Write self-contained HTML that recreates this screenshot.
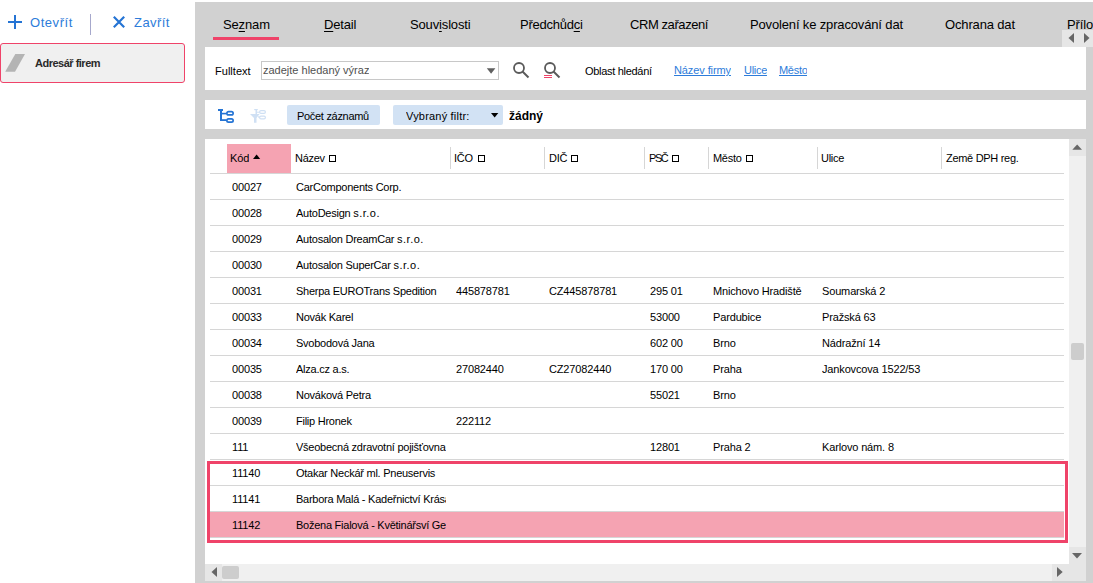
<!DOCTYPE html>
<html><head><meta charset="utf-8">
<style>
*{margin:0;padding:0;box-sizing:border-box}
html,body{width:1093px;height:583px;overflow:hidden;background:#fff;font-family:"Liberation Sans",sans-serif;color:#000}
.a{position:absolute}
.t{position:absolute;white-space:nowrap;font-size:11px;line-height:13px;overflow:hidden}
.bl{color:#2d7cda}
.tab{position:absolute;top:16px;font-size:13px;line-height:16px;white-space:nowrap;color:#000;letter-spacing:-0.15px}
.r{letter-spacing:-0.3px}
.u{text-decoration:underline}
.tab u{text-underline-offset:2px}
</style></head><body>

<svg class="a" style="left:8px;top:15px" width="14" height="14" viewBox="0 0 14 14"><path d="M7 0V14M0 7H14" stroke="#2574d4" stroke-width="2"/></svg>
<div class="t bl" style="left:30px;top:15px;font-size:13px;line-height:15px;overflow:visible;letter-spacing:0.55px">Otevřít</div>
<div class="a" style="left:90px;top:14px;width:1px;height:21px;background:#a6a8cc"></div>
<svg class="a" style="left:113px;top:16px" width="12" height="12" viewBox="0 0 12 12"><path d="M0.8 0.8L11.2 11.2M11.2 0.8L0.8 11.2" stroke="#2574d4" stroke-width="2.2"/></svg>
<div class="t bl" style="left:134px;top:15px;font-size:13px;line-height:15px;overflow:visible;letter-spacing:0.45px">Zavřít</div>
<div class="a" style="left:0;top:43px;width:185px;height:40px;background:#f0f0f0;border:1px solid #ef4369;border-radius:3px"></div>
<svg class="a" style="left:0;top:50px" width="30" height="26"><polygon points="15.3,4 25,4 15,21.7 5.2,21.7" fill="#b4b4b4"/></svg>
<div class="t" style="left:35px;top:57px;font-weight:bold;color:#2a2a2a;letter-spacing:-0.5px;overflow:visible">Adresář firem</div>
<div class="a" style="left:195px;top:2px;width:898px;height:581px;background:#d1d1d1"></div>
<div class="a" style="left:195px;top:2px;width:898px;height:45px;overflow:hidden">
<div class="tab" style="left:28px;top:15px">Se<u>z</u>nam</div>
<div class="tab" style="left:129px;top:15px"><u>D</u>etail</div>
<div class="tab" style="left:215px;top:15px">Souv<u>i</u>slosti</div>
<div class="tab" style="left:325px;top:15px"><span style="letter-spacing:-0.25px">Předchůd<u>c</u>i</span></div>
<div class="tab" style="left:435px;top:15px"><span style="letter-spacing:-0.42px">CRM zařazení</span></div>
<div class="tab" style="left:555px;top:15px">Povolení ke zpracování dat</div>
<div class="tab" style="left:750px;top:15px">Ochrana dat</div>
<div class="tab" style="left:872px;top:15px">Přílohy</div>
</div>
<div class="a" style="left:213px;top:37px;width:66px;height:3px;background:#ef4369"></div>
<div class="a" style="left:1062px;top:30px;width:31px;height:17px;background:#e6e6e6"></div>
<svg class="a" style="left:1062px;top:30px" width="31" height="17"><polygon points="6.5,8 12,3 12,13" fill="#666"/><polygon points="22,3 27.5,8 22,13" fill="#666"/></svg>
<div class="a" style="left:205px;top:47px;width:881px;height:43px;background:#fff"></div>
<div class="t" style="left:215px;top:65px;letter-spacing:0.02px">Fulltext</div>
<div class="a" style="left:261px;top:61px;width:238px;height:19px;border:1px solid #c8c8c8;background:#fff"></div>
<div class="t" style="left:263px;top:64px;color:#505050;letter-spacing:0px">zadejte hledaný výraz</div>
<svg class="a" style="left:486px;top:68px" width="10" height="6"><polygon points="0.8,0.3 9.4,0.3 5.1,5.8" fill="#606060"/></svg>
<svg class="a" style="left:510px;top:60px" width="22" height="22"><circle cx="9" cy="8" r="5" fill="none" stroke="#5a5a5a" stroke-width="1.8"/><path d="M12.5 11.5L18.5 17.5" stroke="#5a5a5a" stroke-width="2"/></svg>
<svg class="a" style="left:541px;top:60px" width="22" height="22"><circle cx="9" cy="8" r="5" fill="none" stroke="#5a5a5a" stroke-width="1.8"/><path d="M12.5 11.5L18.5 17.5" stroke="#5a5a5a" stroke-width="2"/><path d="M3 15.5H11M3 17.5H11" stroke="#ef4369" stroke-width="1"/></svg>
<div class="t r" style="left:585px;top:65px">Oblast hledání</div>
<div class="t u bl" style="left:674px;top:64px;text-underline-offset:1px;letter-spacing:-0.1px">Název firmy</div>
<div class="t u bl r" style="left:744px;top:64px;text-underline-offset:1px">Ulice</div>
<div class="t u bl r" style="left:779px;top:64px;text-underline-offset:1px">Město</div>
<div class="a" style="left:205px;top:100px;width:881px;height:29px;background:#fff"></div>
<svg class="a" style="left:214px;top:104px" width="56" height="24"><g fill="#2574d4"><rect x="4" y="5" width="5" height="2"/><rect x="6" y="5" width="2" height="12"/><rect x="8" y="8.8" width="4.5" height="1.6"/><rect x="6" y="15.2" width="6.5" height="1.8"/></g><rect x="12.85" y="7.55" width="6.3" height="3.4" rx="1.7" fill="none" stroke="#2574d4" stroke-width="1.7"/><rect x="12.85" y="14.9" width="6.3" height="3.3" rx="1.65" fill="none" stroke="#2574d4" stroke-width="1.7"/><g fill="#cfe0f4"><polygon points="36,10 45.6,10 42.5,14 42.5,18.7 40,18.7 40,14"/><rect x="40.2" y="5" width="3.6" height="1.2"/><rect x="41.5" y="5" width="1.5" height="5"/><rect x="43" y="7.7" width="2.6" height="1"/><rect x="44" y="12.3" width="1.6" height="1.3"/></g><rect x="45.6" y="6.6" width="5.8" height="2.8" rx="1.4" fill="none" stroke="#cfe0f4" stroke-width="1.2"/><rect x="45.6" y="12.1" width="5.8" height="2.7" rx="1.35" fill="none" stroke="#cfe0f4" stroke-width="1.2"/></svg>
<div class="a" style="left:287px;top:105px;width:93px;height:20px;background:#d2e2f4;border-radius:2px"></div>
<div class="t r" style="left:297px;top:110px">Počet záznamů</div>
<div class="a" style="left:393px;top:105px;width:110px;height:20px;background:#d2e2f4;border-radius:2px"></div>
<div class="t" style="left:406px;top:110px;letter-spacing:0.2px">Vybraný filtr:</div>
<svg class="a" style="left:491px;top:113px" width="8" height="5"><polygon points="0,0 7.3,0 3.65,4.4" fill="#000"/></svg>
<div class="t" style="left:509px;top:109px;font-size:12px;line-height:14px;font-weight:bold;letter-spacing:0px">žádný</div>
<div class="a" style="left:205px;top:139px;width:881px;height:442px;background:#fff"></div>
<div class="a" style="left:227px;top:144px;width:64px;height:29px;background:#f5a3b2"></div>
<div class="t" style="left:230px;top:152px;letter-spacing:-0.1px">Kód</div>
<svg class="a" style="left:253px;top:154px" width="8" height="6"><polygon points="0,5 7.2,5 3.6,0.6" fill="#000"/></svg>
<div class="t r" style="left:295px;top:152px;overflow:visible">Název</div>
<div class="t r" style="left:454px;top:152px;overflow:visible">IČO</div>
<div class="t r" style="left:549px;top:152px;overflow:visible">DIČ</div>
<div class="t r" style="left:649px;top:152px;overflow:visible"><span style="letter-spacing:-1.4px">PSČ</span></div>
<div class="t r" style="left:713px;top:152px;overflow:visible">Město</div>
<div class="t r" style="left:821px;top:152px;overflow:visible">Ulice</div>
<div class="t r" style="left:946px;top:152px;overflow:visible">Země DPH reg.</div>
<div class="a" style="left:329px;top:155px;width:7px;height:7px;border:1px solid #000"></div>
<div class="a" style="left:478px;top:155px;width:7px;height:7px;border:1px solid #000"></div>
<div class="a" style="left:571px;top:155px;width:7px;height:7px;border:1px solid #000"></div>
<div class="a" style="left:672px;top:155px;width:7px;height:7px;border:1px solid #000"></div>
<div class="a" style="left:746px;top:155px;width:7px;height:7px;border:1px solid #000"></div>
<div class="a" style="left:450px;top:147px;width:1px;height:22px;background:#d6d6d6"></div>
<div class="a" style="left:544px;top:147px;width:1px;height:22px;background:#d6d6d6"></div>
<div class="a" style="left:644px;top:147px;width:1px;height:22px;background:#d6d6d6"></div>
<div class="a" style="left:708px;top:147px;width:1px;height:22px;background:#d6d6d6"></div>
<div class="a" style="left:817px;top:147px;width:1px;height:22px;background:#d6d6d6"></div>
<div class="a" style="left:941px;top:147px;width:1px;height:22px;background:#d6d6d6"></div>
<div class="a" style="left:210px;top:173px;width:854px;height:1px;background:#d6d6d6"></div>
<div class="a" style="left:210px;top:199px;width:854px;height:1px;background:#d6d6d6"></div>
<div class="t" style="left:232px;top:181px;width:58px;letter-spacing:-0.15px">00027</div>
<div class="t" style="left:296px;top:181px;width:150px;letter-spacing:-0.25px">CarComponents Corp.</div>
<div class="a" style="left:210px;top:225px;width:854px;height:1px;background:#d6d6d6"></div>
<div class="t" style="left:232px;top:207px;width:58px;letter-spacing:-0.15px">00028</div>
<div class="t" style="left:296px;top:207px;width:150px;letter-spacing:-0.25px">AutoDesign <span style="letter-spacing:0.5px">s.r.o.</span></div>
<div class="a" style="left:210px;top:251px;width:854px;height:1px;background:#d6d6d6"></div>
<div class="t" style="left:232px;top:233px;width:58px;letter-spacing:-0.15px">00029</div>
<div class="t" style="left:296px;top:233px;width:150px;letter-spacing:-0.25px">Autosalon DreamCar <span style="letter-spacing:0.5px">s.r.o.</span></div>
<div class="a" style="left:210px;top:277px;width:854px;height:1px;background:#d6d6d6"></div>
<div class="t" style="left:232px;top:259px;width:58px;letter-spacing:-0.15px">00030</div>
<div class="t" style="left:296px;top:259px;width:150px;letter-spacing:-0.25px">Autosalon SuperCar <span style="letter-spacing:0.5px">s.r.o.</span></div>
<div class="a" style="left:210px;top:303px;width:854px;height:1px;background:#d6d6d6"></div>
<div class="t" style="left:232px;top:285px;width:58px;letter-spacing:-0.15px">00031</div>
<div class="t" style="left:296px;top:285px;width:150px;letter-spacing:-0.25px">Sherpa EUROTrans Spedition</div>
<div class="t" style="left:456px;top:285px;width:88px;letter-spacing:-0.15px">445878781</div>
<div class="t" style="left:549px;top:285px;width:95px;letter-spacing:-0.15px">CZ445878781</div>
<div class="t" style="left:650px;top:285px;width:58px;letter-spacing:-0.15px">295 01</div>
<div class="t" style="left:713px;top:285px;width:104px;letter-spacing:-0.15px">Mnichovo Hradiště</div>
<div class="t" style="left:822px;top:285px;width:118px;letter-spacing:-0.15px">Soumarská 2</div>
<div class="a" style="left:210px;top:329px;width:854px;height:1px;background:#d6d6d6"></div>
<div class="t" style="left:232px;top:311px;width:58px;letter-spacing:-0.15px">00033</div>
<div class="t" style="left:296px;top:311px;width:150px;letter-spacing:-0.25px">Novák Karel</div>
<div class="t" style="left:650px;top:311px;width:58px;letter-spacing:-0.15px">53000</div>
<div class="t" style="left:713px;top:311px;width:104px;letter-spacing:-0.15px">Pardubice</div>
<div class="t" style="left:822px;top:311px;width:118px;letter-spacing:-0.15px">Pražská 63</div>
<div class="a" style="left:210px;top:355px;width:854px;height:1px;background:#d6d6d6"></div>
<div class="t" style="left:232px;top:337px;width:58px;letter-spacing:-0.15px">00034</div>
<div class="t" style="left:296px;top:337px;width:150px;letter-spacing:-0.25px">Svobodová Jana</div>
<div class="t" style="left:650px;top:337px;width:58px;letter-spacing:-0.15px">602 00</div>
<div class="t" style="left:713px;top:337px;width:104px;letter-spacing:-0.15px">Brno</div>
<div class="t" style="left:822px;top:337px;width:118px;letter-spacing:-0.15px">Nádražní 14</div>
<div class="a" style="left:210px;top:381px;width:854px;height:1px;background:#d6d6d6"></div>
<div class="t" style="left:232px;top:363px;width:58px;letter-spacing:-0.15px">00035</div>
<div class="t" style="left:296px;top:363px;width:150px;letter-spacing:-0.25px">Alza.cz a.s.</div>
<div class="t" style="left:456px;top:363px;width:88px;letter-spacing:-0.15px">27082440</div>
<div class="t" style="left:549px;top:363px;width:95px;letter-spacing:-0.15px">CZ27082440</div>
<div class="t" style="left:650px;top:363px;width:58px;letter-spacing:-0.15px">170 00</div>
<div class="t" style="left:713px;top:363px;width:104px;letter-spacing:-0.15px">Praha</div>
<div class="t" style="left:822px;top:363px;width:118px;letter-spacing:-0.15px">Jankovcova 1522/53</div>
<div class="a" style="left:210px;top:407px;width:854px;height:1px;background:#d6d6d6"></div>
<div class="t" style="left:232px;top:389px;width:58px;letter-spacing:-0.15px">00038</div>
<div class="t" style="left:296px;top:389px;width:150px;letter-spacing:-0.25px">Nováková Petra</div>
<div class="t" style="left:650px;top:389px;width:58px;letter-spacing:-0.15px">55021</div>
<div class="t" style="left:713px;top:389px;width:104px;letter-spacing:-0.15px">Brno</div>
<div class="a" style="left:210px;top:433px;width:854px;height:1px;background:#d6d6d6"></div>
<div class="t" style="left:232px;top:415px;width:58px;letter-spacing:-0.15px">00039</div>
<div class="t" style="left:296px;top:415px;width:150px;letter-spacing:-0.25px">Filip Hronek</div>
<div class="t" style="left:456px;top:415px;width:88px;letter-spacing:-0.15px">222112</div>
<div class="a" style="left:210px;top:459px;width:854px;height:1px;background:#d6d6d6"></div>
<div class="t" style="left:232px;top:441px;width:58px;letter-spacing:-0.15px">111</div>
<div class="t" style="left:296px;top:441px;width:150px;letter-spacing:-0.25px">Všeobecná zdravotní pojišťovna</div>
<div class="t" style="left:650px;top:441px;width:58px;letter-spacing:-0.15px">12801</div>
<div class="t" style="left:713px;top:441px;width:104px;letter-spacing:-0.15px">Praha 2</div>
<div class="t" style="left:822px;top:441px;width:118px;letter-spacing:-0.15px">Karlovo nám. 8</div>
<div class="a" style="left:210px;top:485px;width:854px;height:1px;background:#d6d6d6"></div>
<div class="t" style="left:232px;top:467px;width:58px;letter-spacing:-0.15px">11140</div>
<div class="t" style="left:296px;top:467px;width:150px;letter-spacing:-0.25px">Otakar Neckář ml. Pneuservis</div>
<div class="a" style="left:210px;top:511px;width:854px;height:1px;background:#d6d6d6"></div>
<div class="t" style="left:232px;top:493px;width:58px;letter-spacing:-0.15px">11141</div>
<div class="t" style="left:296px;top:493px;width:150px;letter-spacing:-0.25px">Barbora Malá - Kadeřnictví Krása</div>
<div class="a" style="left:210px;top:512px;width:854px;height:25px;background:#f5a3b2"></div>
<div class="a" style="left:210px;top:537px;width:854px;height:1px;background:#d6d6d6"></div>
<div class="t" style="left:232px;top:519px;width:58px;letter-spacing:-0.15px">11142</div>
<div class="t" style="left:296px;top:519px;width:150px;letter-spacing:-0.25px">Božena Fialová - Květinářsví Gerbera</div>
<div class="a" style="left:207px;top:461px;width:861px;height:82px;border:3px solid #ef4369"></div>
<div class="a" style="left:1069px;top:139px;width:17px;height:425px;background:#f0f0f0"></div>
<div class="a" style="left:1069px;top:139px;width:17px;height:17px;background:#e6e6e6"></div>
<svg class="a" style="left:1069px;top:139px" width="17" height="17"><polygon points="3.3,10.8 13,10.8 8.15,5.4" fill="#666"/></svg>
<div class="a" style="left:1069px;top:547px;width:17px;height:17px;background:#e6e6e6"></div>
<svg class="a" style="left:1069px;top:547px" width="17" height="17"><polygon points="3,6 13,6 8,11.4" fill="#666"/></svg>
<div class="a" style="left:1071px;top:343px;width:13px;height:17px;background:#cdcdcd;border-radius:2px"></div>
<div class="a" style="left:205px;top:564px;width:864px;height:17px;background:#f0f0f0"></div>
<div class="a" style="left:205px;top:564px;width:17px;height:17px;background:#e6e6e6"></div>
<svg class="a" style="left:205px;top:564px" width="17" height="17"><polygon points="12,3 12,13 6.5,8" fill="#666"/></svg>
<div class="a" style="left:222px;top:566px;width:17px;height:13px;background:#cdcdcd;border-radius:2px"></div>
<div class="a" style="left:1052px;top:564px;width:17px;height:17px;background:#e6e6e6"></div>
<svg class="a" style="left:1052px;top:564px" width="17" height="17"><polygon points="5,3 5,13 10.7,8" fill="#666"/></svg>
<div class="a" style="left:1069px;top:564px;width:17px;height:17px;background:#e6e6e6"></div>
</body></html>
